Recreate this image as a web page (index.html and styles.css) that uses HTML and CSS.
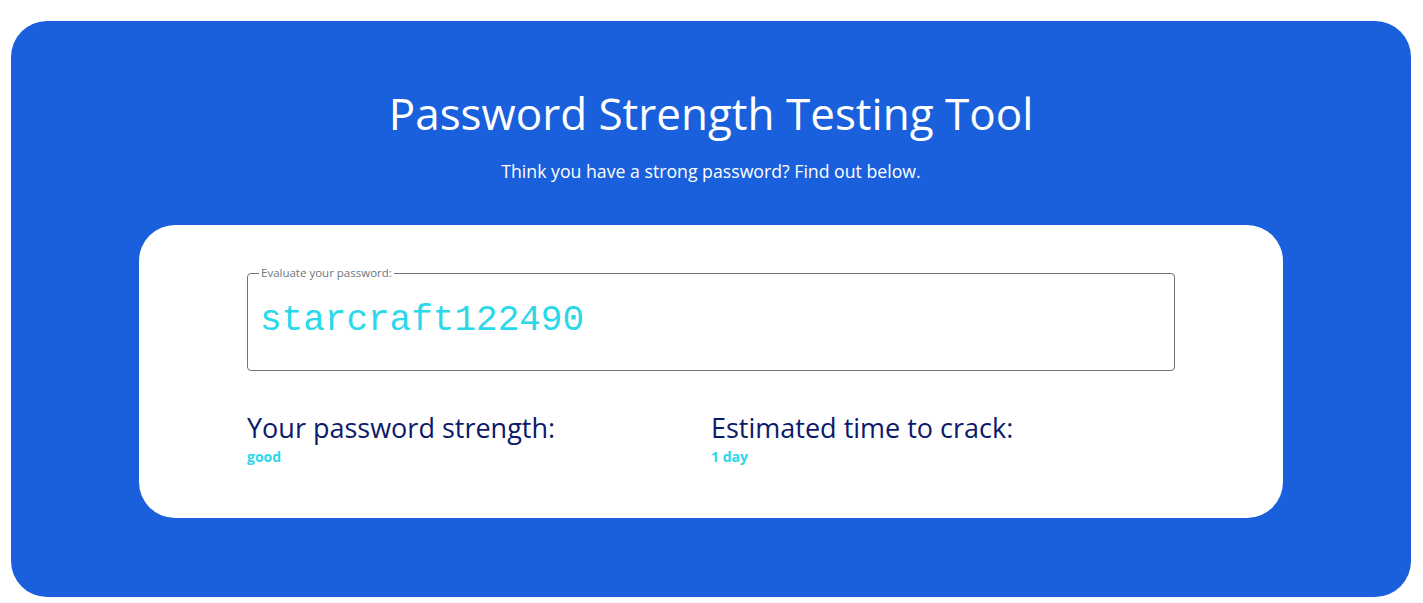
FILE: index.html
```html
<!DOCTYPE html>
<html lang="en">
<head>
<meta charset="utf-8">
<title>Password Strength Testing Tool</title>
<link rel="stylesheet" href="styles.css">
</head>
<body>
<div class="topbar"></div>
<main class="panel">
  <h1 class="title">Password Strength Testing Tool</h1>
  <p class="subtitle">Think you have a strong password? Find out below.</p>
  <section class="card">
    <fieldset class="field">
      <legend class="legend">Evaluate your password:</legend>
      <input class="pw-input" type="text" value="starcraft122490">
    </fieldset>
    <div class="results">
      <div class="result">
        <h2 class="result-label">Your password strength:</h2>
        <div class="result-value">good</div>
      </div>
      <div class="result">
        <h2 class="result-label">Estimated time to crack:</h2>
        <div class="result-value">1 day</div>
      </div>
    </div>
  </section>
</main>
</body>
</html>
```
FILE: styles.css
```css
* { box-sizing: border-box; }
html, body { margin: 0; padding: 0; background: #ffffff; }
body {
  font-family: "Open Sans", "Noto Sans", sans-serif;
  height: 603px;
  overflow: hidden;
}
.topbar {
  height: 0;
  box-shadow: 0 0 10px rgba(0,0,0,0.08);
}
.panel {
  margin: 21px 12px 0 11px;
  height: 576px;
  background: #1a5fdc;
  border-radius: 36px;
  padding-top: 64px;
  display: flex;
  flex-direction: column;
  align-items: center;
}
.title {
  margin: 0;
  color: #ffffff;
  font-weight: 400;
  font-size: 44px;
  line-height: 56px;
}
.subtitle {
  margin: 18px 0 0;
  color: #ffffff;
  font-size: 17.7px;
  line-height: 24px;
}
.card {
  margin-top: 42px;
  width: 1144px;
  height: 293px;
  background: #ffffff;
  border-radius: 36px;
  padding: 41px 108px 0;
}
.field {
  margin: 0;
  padding: 0 12px;
  border: 1px solid #6c757d;
  border-radius: 4px;
  height: 105px;
}
.legend {
  font-size: 11.5px;
  color: #6c757d;
  padding: 0 2px;
  margin-left: -1px;
  line-height: 14px;
}
.pw-input {
  display: block;
  width: 100%;
  border: none;
  outline: none;
  padding: 0;
  margin-top: 19px;
  font-family: "Liberation Mono", monospace;
  font-size: 36px;
  line-height: 44px;
  color: #2ad8ea;
  background: transparent;
}
.results {
  display: grid;
  grid-template-columns: 1fr 1fr;
  margin-top: 40px;
}
.result-label {
  margin: 0;
  font-weight: 400;
  font-size: 27px;
  line-height: 34px;
  color: #0b1a6a;
}
.result-value {
  margin-top: 2px;
  font-weight: 700;
  font-size: 14px;
  line-height: 20px;
  color: #2ad8ea;
}
```
